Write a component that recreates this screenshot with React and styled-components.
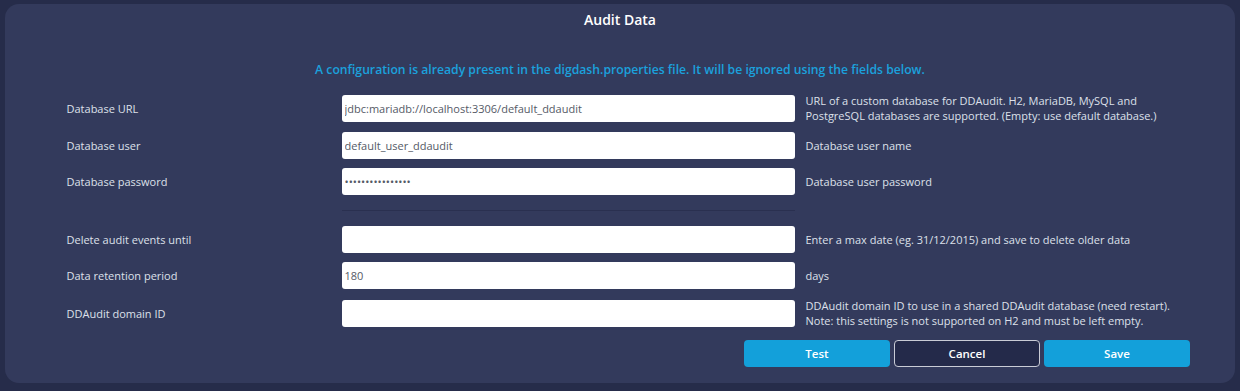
import React from "react";
import styled, { createGlobalStyle } from "styled-components";

const GlobalStyle = createGlobalStyle`
  html, body {
    margin: 0;
    padding: 0;
    background: #262c4a;
    font-family: "Open Sans", "Liberation Sans", sans-serif;
  }
`;

const Page = styled.div`
  padding: 4px 5px 8px 5px;
`;

const Panel = styled.div`
  background: #333a5c;
  border-radius: 14px;
  padding: 6px 0 16px 0;
  display: flex;
  flex-direction: column;
  align-items: center;
`;

const Title = styled.h2`
  margin: 0;
  font-size: 14px;
  font-weight: 600;
  color: #ffffff;
  line-height: 20px;
`;

const Notice = styled.p`
  margin: 31px 0 0 0;
  font-size: 12.2px;
  font-weight: 600;
  color: #1ba1dc;
  line-height: 18px;
`;

const Form = styled.div`
  width: 90%;
  margin-top: 14px;
  display: flex;
  flex-direction: column;
  gap: 9px;
`;

const Row = styled.div`
  display: grid;
  grid-template-columns: 275px 453px 1fr;
  align-items: center;
  min-height: 27px;
`;

const Label = styled.label`
  font-size: 11px;
  color: #dde0ea;
`;

const Input = styled.input`
  box-sizing: border-box;
  height: 27px;
  width: 100%;
  border: none;
  border-radius: 3px;
  background: #ffffff;
  padding: 0 3px;
  font-family: "Open Sans", "Liberation Sans", sans-serif;
  font-size: 11px;
  color: #555a66;
  outline: none;
`;

const Help = styled.div`
  padding-left: 11px;
  font-size: 11px;
  line-height: 15px;
  color: #dde0ea;
  white-space: nowrap;
`;

const Separator = styled.div`
  margin: 6px 0 6px 275px;
  width: 453px;
  height: 1px;
  background: #2a3050;
`;

const Actions = styled.div`
  width: 100%;
  box-sizing: border-box;
  display: flex;
  justify-content: flex-end;
  gap: 4px;
  padding-right: 45px;
  margin-top: 12px;
`;

const Button = styled.button`
  width: 146px;
  height: 27px;
  border-radius: 4px;
  font-family: "Open Sans", "Liberation Sans", sans-serif;
  font-size: 11.5px;
  font-weight: 600;
  color: #ffffff;
  cursor: pointer;
  background: ${(p) => (p.$outline ? "#242a4a" : "#13a0da")};
  border: ${(p) => (p.$outline ? "1px solid #c9ccd6" : "none")};
`;

const fields = [
  {
    label: "Database URL",
    value: "jdbc:mariadb://localhost:3306/default_ddaudit",
    help: ["URL of a custom database for DDAudit. H2, MariaDB, MySQL and", "PostgreSQL databases are supported. (Empty: use default database.)"],
  },
  { label: "Database user", value: "default_user_ddaudit", help: ["Database user name"] },
  { label: "Database password", value: "passwordpassword", type: "password", help: ["Database user password"] },
];

const auditFields = [
  { label: "Delete audit events until", value: "", help: ["Enter a max date (eg. 31/12/2015) and save to delete older data"] },
  { label: "Data retention period", value: "180", help: ["days"] },
  {
    label: "DDAudit domain ID",
    value: "",
    help: ["DDAudit domain ID to use in a shared DDAudit database (need restart).", "Note: this settings is not supported on H2 and must be left empty."],
  },
];

function FieldRow({ label, value, type, help }) {
  return (
    <Row>
      <Label>{label}</Label>
      <Input type={type || "text"} defaultValue={value} />
      <Help>
        {help.map((line) => (
          <div key={line}>{line}</div>
        ))}
      </Help>
    </Row>
  );
}

export default function App() {
  return (
    <Page>
      <GlobalStyle />
      <Panel>
        <Title>Audit Data</Title>
        <Notice>
          A configuration is already present in the digdash.properties file. It will be ignored using the fields below.
        </Notice>
        <Form>
          {fields.map((f) => (
            <FieldRow key={f.label} {...f} />
          ))}
          <Separator />
          {auditFields.map((f) => (
            <FieldRow key={f.label} {...f} />
          ))}
        </Form>
        <Actions>
          <Button>Test</Button>
          <Button $outline>Cancel</Button>
          <Button>Save</Button>
        </Actions>
      </Panel>
    </Page>
  );
}
